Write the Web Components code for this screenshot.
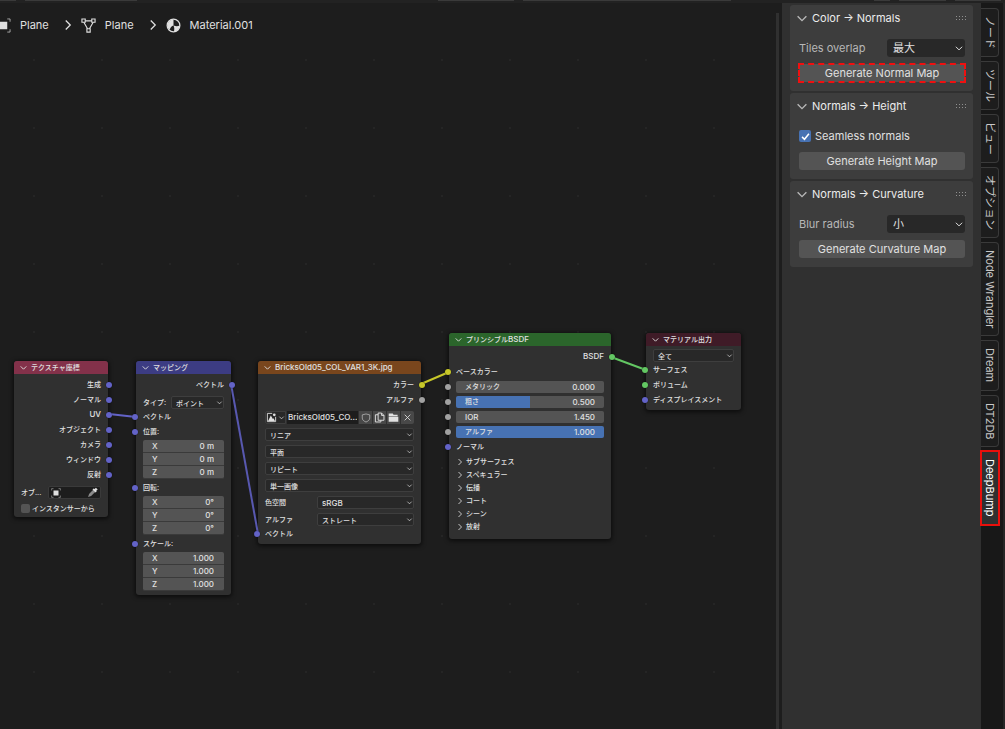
<!DOCTYPE html>
<html lang="ja">
<head>
<meta charset="utf-8">
<title>Shader Editor</title>
<style>
  html, body {
    height: 100%;
    margin: 0;
  }
  body {
    background: #1d1d1d;
    color: #e0e0e0;
    font: 11px/18px Inter, "Noto Sans CJK JP", sans-serif;
    overflow: hidden;
  }
  .latin {
    font-size: 8px;
  }
</style>
</head>
<body>

<shader-editor>
  <bl-path slot="canvas">
    <bl-crumb icon="object">Plane</bl-crumb>
    <bl-crumb icon="mesh">Plane</bl-crumb>
    <bl-crumb icon="material">Material.001</bl-crumb>
  </bl-path>

  <bl-node slot="canvas" color="#83314a" style="left: 14px; top: 361px; width: 94px">
    <span slot="title">テクスチャ座標</span>
    <bl-socket side="out" type="vector">生成</bl-socket>
    <bl-socket side="out" type="vector">ノーマル</bl-socket>
    <bl-socket side="out" type="vector"><span class="latin">UV</span></bl-socket>
    <bl-socket side="out" type="vector">オブジェクト</bl-socket>
    <bl-socket side="out" type="vector">カメラ</bl-socket>
    <bl-socket side="out" type="vector">ウィンドウ</bl-socket>
    <bl-socket side="out" type="vector">反射</bl-socket>
    <bl-object-picker label="オブ..."></bl-object-picker>
    <bl-checkbox small label="インスタンサーから"></bl-checkbox>
  </bl-node>

  <bl-node slot="canvas" color="#3c3c83" style="left: 136px; top: 361px; width: 95px">
    <span slot="title">マッピング</span>
    <bl-socket side="out" type="vector">ベクトル</bl-socket>
    <bl-select small label="タイプ:" split="28px" value="ポイント"></bl-select>
    <bl-socket side="in" type="vector">ベクトル</bl-socket>
    <bl-socket side="in" type="vector">位置:</bl-socket>
    <bl-vector name="位置" values="0 m,0 m,0 m"></bl-vector>
    <bl-socket side="in" type="vector">回転:</bl-socket>
    <bl-vector name="回転" values="0°,0°,0°"></bl-vector>
    <bl-socket side="in" type="vector">スケール:</bl-socket>
    <bl-vector name="スケール" values="1.000,1.000,1.000"></bl-vector>
  </bl-node>

  <bl-node slot="canvas" color="#79461d" style="left: 258px; top: 361px; width: 163px">
    <span slot="title" class="latin">BricksOld05_COL_VAR1_3K.jpg</span>
    <bl-socket side="out" type="color">カラー</bl-socket>
    <bl-socket side="out" type="value">アルファ</bl-socket>
    <bl-image-picker value="BricksOld05_CO..."></bl-image-picker>
    <bl-select small name="補間" value="リニア"></bl-select>
    <bl-select small name="投影" value="平面"></bl-select>
    <bl-select small name="延長" value="リピート"></bl-select>
    <bl-select small name="ソース" value="単一画像"></bl-select>
    <bl-select small latin label="色空間" split="52px" value="sRGB"></bl-select>
    <bl-select small label="アルファ" split="52px" value="ストレート"></bl-select>
    <bl-socket side="in" type="vector">ベクトル</bl-socket>
  </bl-node>

  <bl-node slot="canvas" color="#2b652b" style="left: 449px; top: 333px; width: 162px">
    <span slot="title">プリンシブル<span class="latin">BSDF</span></span>
    <bl-socket side="out" type="shader"><span class="latin">BSDF</span></bl-socket>
    <bl-socket side="in" type="color">ベースカラー</bl-socket>
    <bl-socket side="in" type="value"><bl-slider label="メタリック" value="0.000" max="1"></bl-slider></bl-socket>
    <bl-socket side="in" type="value"><bl-slider label="粗さ" value="0.500" max="1"></bl-slider></bl-socket>
    <bl-socket side="in" type="value"><bl-slider latin plain label="IOR" value="1.450" max="1000"></bl-slider></bl-socket>
    <bl-socket side="in" type="value"><bl-slider label="アルファ" value="1.000" max="1"></bl-slider></bl-socket>
    <bl-socket side="in" type="vector">ノーマル</bl-socket>
    <bl-sections items="サブサーフェス,スペキュラー,伝播,コート,シーン,放射"></bl-sections>
  </bl-node>

  <bl-node slot="canvas" color="#3f1b27" style="left: 646px; top: 333px; width: 95px">
    <span slot="title">マテリアル出力</span>
    <bl-select small tight name="ターゲット" value="全て"></bl-select>
    <bl-socket side="in" type="shader">サーフェス</bl-socket>
    <bl-socket side="in" type="shader">ボリューム</bl-socket>
    <bl-socket side="in" type="vector">ディスプレイスメント</bl-socket>
  </bl-node>

  <bl-panel slot="sidebar" heading="Color → Normals">
    <bl-select label="Tiles overlap" split="88px" value="最大"></bl-select>
    <bl-button marked>Generate Normal Map</bl-button>
  </bl-panel>
  <bl-panel slot="sidebar" heading="Normals → Height">
    <bl-checkbox checked label="Seamless normals"></bl-checkbox>
    <bl-button>Generate Height Map</bl-button>
  </bl-panel>
  <bl-panel slot="sidebar" heading="Normals → Curvature">
    <bl-select label="Blur radius" split="88px" value="小"></bl-select>
    <bl-button>Generate Curvature Map</bl-button>
  </bl-panel>

  <bl-tab slot="tabs">ノード</bl-tab>
  <bl-tab slot="tabs">ツール</bl-tab>
  <bl-tab slot="tabs">ビュー</bl-tab>
  <bl-tab slot="tabs">オプション</bl-tab>
  <bl-tab slot="tabs">Node Wrangler</bl-tab>
  <bl-tab slot="tabs">Dream</bl-tab>
  <bl-tab slot="tabs">DT2DB</bl-tab>
  <bl-tab slot="tabs" selected>DeepBump</bl-tab>
</shader-editor>

<script>
const ICONS = {
  down: '<path d="M3 6l5 5 5-5" fill="none" stroke="currentColor" stroke-width="1.6"/>',
  right: '<path d="M5 2l6 6-6 6" fill="none" stroke="currentColor" stroke-width="1.7"/>',
  check: '<path d="M3 8.500l3.500 3.500L13 4" fill="none" stroke="currentColor" stroke-width="2.200"/>',
  object: '<path d="M4 4h8v8H4z" fill="currentColor"/><path d="M1 4V1h3M12 1h3v3M15 12v3h-3M4 15H1v-3" fill="none" stroke="currentColor" opacity=".7"/>',
  mesh: '<g fill="none" stroke="currentColor" stroke-width="1.200"><path d="M4.500 3h7M3 4.500l4 7M13 4.500l-4 7"/><path d="M1 1h3.500v3.500H1zM11.500 1H15v3.500h-3.500zM6.300 11.500h3.500V15H6.300z"/></g>',
  material: '<circle cx="8" cy="8" r="6.800" fill="none" stroke="currentColor" stroke-width="1.300"/><path d="M8 8V1.500A6.500 6.500 0 0 0 1.500 8c0 2 1 3.500 2.500 4.500C4.500 10 6 8.500 8 8zM8 8c2.500 1 5 1 6.500 0 0 3.500-2.500 6.500-6 6.500C9 12 9 10 8 8z" fill="currentColor"/>',
  dropper: '<path d="M10 3l3 3-7 7-4.500 1.500L3 10z" fill="#8a8a8a"/><path d="M11 3l2-2 2.500 2.500-2 2 .5 1-1.500 1.500-4.500-4.500L9.500 2z" fill="currentColor"/>',
  image: '<path d="M14 7v7H2V2h7" fill="none" stroke="currentColor" stroke-width="1.300"/><path d="M3 13l4-8 3 5 1-1 2 4z" fill="currentColor"/><circle cx="12" cy="4" r="2" fill="currentColor"/>',
  shield: '<path d="M8 1.500l6 1.500v5c0 3-2.500 5-6 6.500C4.500 13 2 11 2 8V3z" fill="none" stroke="currentColor" stroke-width="1.300" opacity=".7"/>',
  copy: '<path d="M6 1.500h5l3.500 3.500v7H6zM11 1.500V5h3.500M6 4H2v10.500h8V12" fill="none" stroke="currentColor" stroke-width="1.400"/>',
  folder: '<path d="M1 2h6l1 2h6v2H1zM1 7h14v7H1z" fill="currentColor"/>',
  cross: '<path d="M3 3l10 10M13 3L3 13" fill="none" stroke="currentColor" stroke-width="1.500"/>'
}

function icon(name, size) {
  return `<svg class="icon" viewBox="0 0 16 16" width="${size}" height="${size}" aria-hidden="true">${ICONS[name]}</svg>`
}

class BaseElement extends HTMLElement {
  connectedCallback() {
    if (this.shadowRoot) {
      return
    }
    this.attachShadow({ mode: 'open' })
    this.shadowRoot.innerHTML = `
      <style>
        * { box-sizing: border-box; }
        .icon { display: block; flex: none; }
        button, input, select {
          appearance: none;
          margin: 0;
          padding: 0;
          border: 0;
          background: none;
          color: inherit;
          font: inherit;
          min-width: 0;
        }
      </style>
      ${this.render()}
    `
  }

  attr(name) {
    return this.getAttribute(name) || ''
  }
}

class ShaderEditor extends BaseElement {
  render() {
    return `
      <style>
        :host {
          display: flex;
          flex-direction: column;
          height: 100vh;
        }
        #menubar {
          display: flex;
          flex: none;
          gap: 9px;
          height: 3px;
          background: #222;
        }
        #menubar i {
          height: 1px;
          background: #3a3a3a;
        }
        #menubar i:nth-of-type(1) { width: 16px; }
        #menubar i:nth-of-type(2) { width: 112px; }
        #menubar i:nth-of-type(3) { width: 76px; margin-left: auto; }
        #menubar i:nth-of-type(4) { width: 208px; margin-right: 134px; }
        #menubar i:nth-of-type(5) { width: 16px; }
        #menubar i:nth-of-type(6) { width: 47px; }
        #menubar i:nth-of-type(7) { width: 46px; margin-right: 4px; }
        #area {
          display: flex;
          flex: 1;
          min-height: 0;
        }
        main {
          flex: 1;
          min-width: 0;
          background: radial-gradient(circle at 34px 34px, #252525 1px, transparent 1px) 0 23px / 68px 68px;
        }
        #wires {
          position: absolute;
          left: 0;
          top: 0;
          z-index: 1;
          pointer-events: none;
        }
        #scrollbar {
          flex: none;
          width: 3px;
          margin: 10px 3px 0 0;
          background: #303030;
        }
        aside {
          flex: none;
          display: flex;
          flex-direction: column;
          gap: 2px;
          width: 199px;
          padding: 2px 8px;
          background: #303030;
        }
        nav {
          flex: none;
          display: flex;
          flex-direction: column;
          align-items: flex-start;
          gap: 4px;
          width: 24px;
          padding-top: 5px;
          background: #181818;
          border-right: 2px solid #262626;
        }
      </style>
      <div id="menubar"><i></i><i></i><i></i><i></i><i></i><i></i><i></i></div>
      <div id="area">
        <main>
          <slot name="canvas"></slot>
          <svg id="wires" width="776" height="729" fill="none" stroke-width="2" aria-hidden="true">
            <path d="M109 414L136 417" stroke="#6363c7"/>
            <path d="M231 384L258 534" stroke="#5858b0"/>
            <path d="M421 384L449 372" stroke="#c7c729"/>
            <path d="M611 357L646 370" stroke="#63c763"/>
          </svg>
        </main>
        <div id="scrollbar"></div>
        <aside><slot name="sidebar"></slot></aside>
        <nav role="tablist"><slot name="tabs"></slot></nav>
      </div>
    `
  }
}

class Path extends BaseElement {
  render() {
    return `
      <style>
        :host {
          display: flex;
          padding: 13px 0 0;
          margin-left: -4px;
        }
      </style>
      <slot></slot>
    `
  }
}

class Crumb extends BaseElement {
  render() {
    return `
      <style>
        :host {
          display: flex;
          align-items: center;
        }
        .separator { margin: 0 7px 0 13px; }
        :host(:first-child) .separator { display: none; }
        .name { margin-left: 9px; }
      </style>
      <span class="separator">${icon('right', 12)}</span>
      ${icon(this.attr('icon'), 15)}
      <span class="name"><slot></slot></span>
    `
  }
}

class Node extends BaseElement {
  render() {
    return `
      <style>
        :host {
          position: absolute;
          box-sizing: border-box;
          padding-bottom: 3px;
          background: #303030;
          border-radius: 3px;
          box-shadow: 0 1px 4px 1px rgba(0, 0, 0, 0.6);
          font-size: 7px;
          font-weight: 500;
          line-height: 13px;
          white-space: nowrap;
        }
        header {
          display: flex;
          align-items: center;
          gap: 3px;
          height: 13px;
          margin-bottom: 3px;
          padding-left: 5px;
          border-radius: 3px 3px 0 0;
          background: ${this.attr('color')};
        }
      </style>
      <header>${icon('down', 9)}<slot name="title"></slot></header>
      <slot></slot>
    `
  }
}

class Socket extends BaseElement {
  render() {
    return `
      <style>
        :host {
          --dot: #6363c7;
          position: relative;
          display: flex;
          align-items: center;
          height: 15px;
          padding: 0 7px;
        }
        :host([type="color"]) { --dot: #c7c729; }
        :host([type="value"]) { --dot: #a1a1a1; }
        :host([type="shader"]) { --dot: #63c763; }
        :host([side="out"]) { justify-content: flex-end; }
        i {
          position: absolute;
          left: -4px;
          z-index: 2;
          width: 6px;
          height: 6px;
          border-radius: 50%;
          background: var(--dot);
          box-shadow: 0 0 1px #000;
        }
        :host([side="out"]) i {
          left: auto;
          right: -4px;
        }
      </style>
      <i></i><slot></slot>
    `
  }
}

class Select extends BaseElement {
  render() {
    const label = this.attr('label')
    const small = this.hasAttribute('small')
    return `
      <style>
        :host {
          display: flex;
          align-items: center;
        }
        :host([small]) { margin: 4px 7px 0; }
        :host([tight]) { margin-top: 0; }
        label {
          flex: none;
          width: ${this.attr('split') || 0};
          color: #b8b8b8;
        }
        :host([small]) label { color: inherit; }
        .box {
          flex: 1;
          display: grid;
          align-items: center;
          min-width: 0;
        }
        .box > * { grid-area: 1 / 1; }
        select {
          width: 100%;
          height: 18px;
          padding: 0 6px;
          border-radius: 3px;
          background: #282828;
        }
        :host([small]) select {
          height: 13px;
          padding: 0 4px;
          border: 1px solid #3e3e3e;
          border-radius: 2px;
        }
        :host([latin]) select { font-size: 8px; }
        .icon {
          justify-self: end;
          margin-right: 1px;
          pointer-events: none;
        }
      </style>
      ${label ? `<label for="field">${label}</label>` : ''}
      <div class="box">
        <select id="field" ${label ? '' : `aria-label="${this.attr('name')}"`}>
          <option>${this.attr('value')}</option>
        </select>
        ${icon('down', small ? 7 : 10)}
      </div>
    `
  }
}

class Checkbox extends BaseElement {
  render() {
    return `
      <style>
        :host { display: block; }
        :host([small]) { margin: 4px 7px 0; }
        label {
          display: flex;
          align-items: center;
          gap: 4px;
          height: 18px;
        }
        :host([small]) label {
          gap: 2px;
          height: 11px;
        }
        .box {
          display: grid;
          place-items: center;
        }
        .box > * { grid-area: 1 / 1; }
        input {
          width: 12px;
          height: 12px;
          border-radius: 2px;
          background: #545454;
        }
        :host([small]) input {
          width: 9px;
          height: 9px;
        }
        input:checked { background: #4772b3; }
        .icon {
          display: none;
          color: #fff;
          pointer-events: none;
        }
        input:checked + .icon { display: block; }
      </style>
      <label>
        <span class="box">
          <input type="checkbox" ${this.hasAttribute('checked') ? 'checked' : ''}>
          ${icon('check', this.hasAttribute('small') ? 8 : 11)}
        </span>
        ${this.attr('label')}
      </label>
    `
  }
}

class ObjectPicker extends BaseElement {
  render() {
    return `
      <style>
        :host {
          display: flex;
          align-items: center;
          margin: 4px 7px 0;
        }
        span {
          flex: none;
          width: 27px;
        }
        button {
          flex: 1;
          display: flex;
          align-items: center;
          justify-content: space-between;
          height: 13px;
          padding: 0 2px;
          background: #1d1d1d;
          border: 1px solid #3a3a3a;
          border-radius: 2px;
        }
      </style>
      <span id="label">${this.attr('label')}</span>
      <button aria-labelledby="label">${icon('object', 10)}${icon('dropper', 11)}</button>
    `
  }
}

class ImagePicker extends BaseElement {
  render() {
    return `
      <style>
        :host {
          display: flex;
          gap: 1px;
          height: 13px;
          margin: 4px 7px 0;
        }
        button {
          flex: none;
          display: flex;
          align-items: center;
          justify-content: center;
          width: 13px;
          background: #484848;
        }
        button:first-of-type {
          gap: 1px;
          width: 21px;
          background: #282828;
          border: 1px solid #3e3e3e;
          border-radius: 2px 0 0 2px;
        }
        button:last-of-type { border-radius: 0 2px 2px 0; }
        input {
          flex: 1;
          padding: 0 1px;
          background: #1d1d1d;
          font-size: 8px;
        }
      </style>
      <button aria-label="画像を選択">${icon('image', 11)}${icon('down', 7)}</button>
      <input aria-label="画像名" value="${this.attr('value')}">
      <button aria-label="フェイクユーザー">${icon('shield', 10)}</button>
      <button aria-label="複製">${icon('copy', 11)}</button>
      <button aria-label="開く">${icon('folder', 11)}</button>
      <button aria-label="リンク解除">${icon('cross', 9)}</button>
    `
  }
}

class Vector extends BaseElement {
  render() {
    const rows = this.attr('values').split(',').map((value, i) => {
      const axis = 'XYZ'[i]
      return `
        <div>
          <label for="${axis}">${axis}</label>
          <input id="${axis}" value="${value}">
        </div>
      `
    })
    return `
      <style>
        :host {
          display: block;
          margin: 1px 7px;
          font-size: 8px;
        }
        div {
          display: flex;
          align-items: center;
          height: 13px;
          padding: 0 10px 0 9px;
          background: #545454;
          border-bottom: 1px solid #3a3a3a;
          line-height: 12px;
        }
        div:first-of-type { border-radius: 2px 2px 0 0; }
        div:last-of-type { border-radius: 0 0 2px 2px; }
        input {
          flex: 1;
          height: 12px;
          text-align: right;
        }
      </style>
      ${rows.join('')}
    `
  }
}

class Slider extends BaseElement {
  render() {
    const value = this.attr('value')
    const fill = this.hasAttribute('plain') ? 0 : value * 100
    return `
      <style>
        :host {
          flex: 1;
          display: grid;
          align-items: center;
          line-height: 12px;
        }
        input, label, output { grid-area: 1 / 1; }
        input {
          width: 100%;
          height: 12px;
          border-radius: 2px;
          background: linear-gradient(to right, #4772b3 ${fill}%, #545454 ${fill}%);
        }
        input::-webkit-slider-thumb {
          appearance: none;
          width: 1px;
          height: 12px;
        }
        label, output {
          pointer-events: none;
        }
        label { padding-left: 9px; }
        :host([latin]) label { font-size: 8px; }
        output {
          justify-self: end;
          padding-right: 9px;
          font-size: 8px;
        }
      </style>
      <input id="range" type="range" min="0" max="${this.attr('max')}" step="0.001" value="${value}">
      <label for="range">${this.attr('label')}</label>
      <output for="range">${value}</output>
    `
  }
}

class Sections extends BaseElement {
  render() {
    const rows = this.attr('items').split(',').map(item => `<button aria-expanded="false">${icon('right', 8)}${item}</button>`)
    return `
      <style>
        :host {
          display: flex;
          flex-direction: column;
          padding: 1px 7px 3px;
        }
        button {
          display: flex;
          align-items: center;
          gap: 2px;
          height: 13px;
        }
      </style>
      ${rows.join('')}
    `
  }
}

class Panel extends BaseElement {
  render() {
    return `
      <style>
        :host {
          display: block;
          background: #3d3d3d;
          border-radius: 3px;
        }
        header {
          display: flex;
          align-items: center;
          gap: 3px;
          height: 26px;
          padding: 0 6px 0 5px;
          color: #ececec;
        }
        header .icon { color: #b8b8b8; }
        .grip {
          width: 12px;
          height: 6px;
          margin-left: auto;
          background: radial-gradient(circle, #909090 1px, transparent 1px) 0 0 / 3px 3px;
        }
        .body {
          display: flex;
          flex-direction: column;
          gap: 7px;
          padding: 8px 8px 9px 9px;
        }
      </style>
      <header>${icon('down', 14)}<span>${this.attr('heading')}</span><i class="grip"></i></header>
      <div class="body"><slot></slot></div>
    `
  }
}

class Button extends BaseElement {
  render() {
    return `
      <style>
        :host { display: flex; }
        button {
          flex: 1;
          height: 18px;
          border-radius: 3px;
          background: #545454;
          text-align: center;
        }
        :host([marked]) button {
          border-radius: 0;
          outline: 2px dashed #f01010;
          outline-offset: -1px;
        }
      </style>
      <button><slot></slot></button>
    `
  }
}

class Tab extends BaseElement {
  render() {
    return `
      <style>
        :host { display: flex; }
        button {
          width: 18px;
          padding: 7px 0;
          border: 1px solid #3a3a3a;
          border-left: 0;
          border-radius: 0 4px 4px 0;
          background: #1d1d1d;
          color: #c8c8c8;
          line-height: 17px;
          writing-mode: vertical-rl;
          text-orientation: sideways;
        }
        :host([selected]) button {
          border-radius: 0;
          background: #303030;
          color: #fff;
          outline: 2px solid #e8100c;
          outline-offset: -1px;
        }
      </style>
      <button role="tab" aria-selected="${this.hasAttribute('selected')}"><slot></slot></button>
    `
  }
}

customElements.define('shader-editor', ShaderEditor)
customElements.define('bl-path', Path)
customElements.define('bl-crumb', Crumb)
customElements.define('bl-node', Node)
customElements.define('bl-socket', Socket)
customElements.define('bl-select', Select)
customElements.define('bl-checkbox', Checkbox)
customElements.define('bl-object-picker', ObjectPicker)
customElements.define('bl-image-picker', ImagePicker)
customElements.define('bl-vector', Vector)
customElements.define('bl-slider', Slider)
customElements.define('bl-sections', Sections)
customElements.define('bl-panel', Panel)
customElements.define('bl-button', Button)
customElements.define('bl-tab', Tab)
</script>
</body>
</html>
